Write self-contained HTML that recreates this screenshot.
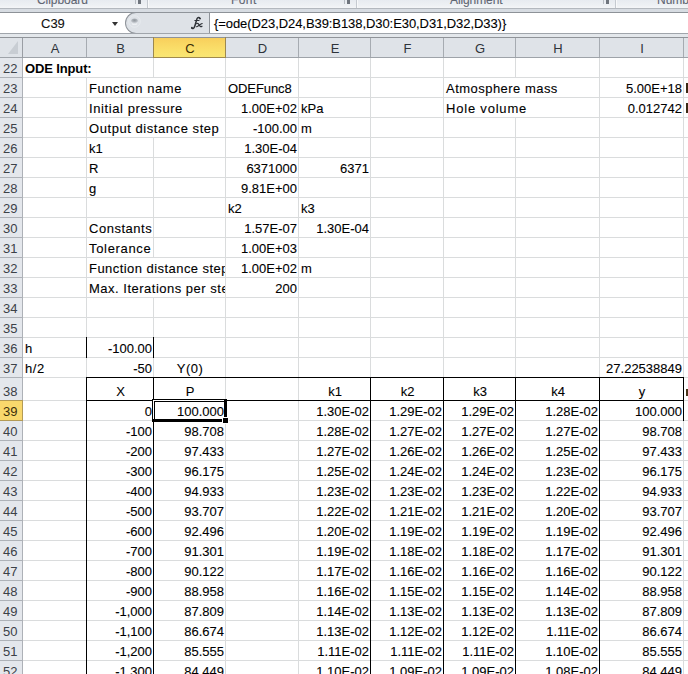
<!DOCTYPE html><html><head><meta charset="utf-8"><style>
*{margin:0;padding:0;box-sizing:border-box}
html,body{width:688px;height:674px;overflow:hidden;background:#fff}
body{position:relative;font-family:"Liberation Sans",sans-serif;font-size:13px;color:#000}
.a{position:absolute}
.t{position:absolute;white-space:pre;line-height:15px;font-size:13px;-webkit-text-stroke:0.1px currentColor}
.ns{-webkit-text-stroke:0}
.gh{position:absolute;height:1px;background:#dadcdd}
.gv{position:absolute;width:1px;background:#dadcdd}
.k{position:absolute;background:#000}
</style></head><body>

<div class="a" style="left:0;top:0;width:688px;height:8px;background:linear-gradient(#e7ebf0,#eef1f4 70%,#f4f6f8)"></div>
<div class="t" style="left:37px;top:-7px;color:#5f6672;font-size:12px;letter-spacing:-0.05px">Clipboard</div>
<div class="t" style="left:231px;top:-7px;color:#5f6672;font-size:12px;letter-spacing:0.4px">Font</div>
<div class="t" style="left:450px;top:-7px;color:#5f6672;font-size:12px;letter-spacing:-0.1px">Alignment</div>
<div class="t" style="left:657px;top:-7px;color:#5f6672;font-size:12px;letter-spacing:0px">Number</div>
<div class="a" style="left:147px;top:0;width:1px;height:8px;background:#c5cad0"></div>
<div class="a" style="left:148px;top:0;width:1px;height:8px;background:#f8f9fa"></div>
<div class="a" style="left:356px;top:0;width:1px;height:8px;background:#c5cad0"></div>
<div class="a" style="left:357px;top:0;width:1px;height:8px;background:#f8f9fa"></div>
<div class="a" style="left:615px;top:0;width:1px;height:8px;background:#c5cad0"></div>
<div class="a" style="left:616px;top:0;width:1px;height:8px;background:#f8f9fa"></div>
<div class="a" style="left:135px;top:0;width:1px;height:4px;background:#b9bec4"></div>
<div class="a" style="left:138px;top:0;width:3px;height:4px;background:#6f757d"></div>
<div class="a" style="left:344px;top:0;width:1px;height:4px;background:#b9bec4"></div>
<div class="a" style="left:347px;top:0;width:3px;height:4px;background:#6f757d"></div>
<div class="a" style="left:603px;top:0;width:1px;height:4px;background:#b9bec4"></div>
<div class="a" style="left:606px;top:0;width:3px;height:4px;background:#6f757d"></div>
<div class="a" style="left:0;top:8px;width:688px;height:1px;background:#b3b8be"></div>
<div class="a" style="left:0;top:9px;width:688px;height:3px;background:#d7dce2"></div>
<div class="a" style="left:0;top:12px;width:688px;height:1px;background:#8d9298"></div>
<div class="a" style="left:0;top:13px;width:688px;height:20px;background:#fff"></div>
<div class="a" style="left:125px;top:12px;width:85px;height:22px;background:#dee2e7;border:1px solid #8f949a;border-right:none;border-radius:11px 0 0 11px"></div>
<svg class="a" style="left:126px;top:13px" width="18" height="20"><defs><radialGradient id="cg" cx="50%" cy="35%" r="60%"><stop offset="0" stop-color="#8f959b"/><stop offset="0.6" stop-color="#b3b8be"/><stop offset="1" stop-color="#dfe3e8"/></radialGradient></defs><circle cx="8.5" cy="8.5" r="5.8" fill="none" stroke="#e9ecf0" stroke-width="0.8"/><ellipse cx="8.5" cy="8" rx="3.6" ry="2.6" fill="url(#cg)"/><path d="M6 10.8 C7.3 11.8 9.7 11.8 11 10.8" fill="none" stroke="#f4f6f8" stroke-width="1"/></svg>
<div class="a" style="left:209px;top:13px;width:1px;height:20px;background:#8d9298"></div>
<div class="t" style="left:41px;top:16px;font-size:13px;color:#111">C39</div>
<div class="a" style="left:112px;top:22px;width:0;height:0;border-left:3.5px solid transparent;border-right:3.5px solid transparent;border-top:4px solid #333"></div>
<svg class="a" style="left:188px;top:14px" width="20" height="18"><g fill="none" stroke="#2f3338" stroke-linecap="round"><path d="M11.9 4.3 C11.2 3.1 9.7 3.2 9.1 4.5 C8.3 6.2 7.4 11.2 6.4 13.1 C5.7 14.5 4.4 14.9 3.7 14.1" stroke-width="1.5"/><path d="M6.9 6.5 H11" stroke-width="1.2"/><path d="M8.7 9.6 C9.8 9.1 10.6 9.8 11.2 11.1 C11.8 12.4 12.7 12.9 13.9 12.3" stroke-width="1.3"/><path d="M14.2 9.6 C12.5 10.2 10.8 11.6 8.6 12.7" stroke-width="1.1"/></g><circle cx="12" cy="4.6" r="0.9" fill="#2f3338"/><circle cx="3.9" cy="13.6" r="0.9" fill="#2f3338"/></svg>
<div class="t" style="left:214px;top:16px;font-size:13px;color:#000;letter-spacing:-0.07px">{=ode(D23,D24,B39:B138,D30:E30,D31,D32,D33)}</div>
<div class="a" style="left:0;top:33px;width:688px;height:1px;background:#a0a5ab"></div>
<div class="a" style="left:0;top:34px;width:688px;height:3px;background:#e3e7eb"></div>
<div class="a" style="left:0;top:37px;width:688px;height:1px;background:#8f9398"></div>
<div class="a" style="left:0;top:38px;width:688px;height:19px;background:#dfe3e8"></div>
<div class="a" style="left:153px;top:38px;width:72px;height:19px;background:linear-gradient(#f8cf5c,#fadf6a 60%,#f9e673)"></div>
<div class="a" style="left:22px;top:38px;width:1px;height:19px;background:#a6abb1"></div>
<div class="a" style="left:86px;top:38px;width:1px;height:19px;background:#a6abb1"></div>
<div class="a" style="left:153px;top:38px;width:1px;height:19px;background:#a6abb1"></div>
<div class="a" style="left:225px;top:38px;width:1px;height:19px;background:#a6abb1"></div>
<div class="a" style="left:298px;top:38px;width:1px;height:19px;background:#a6abb1"></div>
<div class="a" style="left:370px;top:38px;width:1px;height:19px;background:#a6abb1"></div>
<div class="a" style="left:443px;top:38px;width:1px;height:19px;background:#a6abb1"></div>
<div class="a" style="left:515px;top:38px;width:1px;height:19px;background:#a6abb1"></div>
<div class="a" style="left:599px;top:38px;width:1px;height:19px;background:#a6abb1"></div>
<div class="a" style="left:683px;top:38px;width:1px;height:19px;background:#a6abb1"></div>
<div class="a" style="left:153px;top:37px;width:1px;height:21px;background:#9c8850"></div>
<div class="a" style="left:225px;top:37px;width:1px;height:21px;background:#9c8850"></div>
<div class="a" style="left:0;top:57px;width:688px;height:1px;background:#9ea3a9"></div>
<div class="a" style="left:153px;top:57px;width:73px;height:1px;background:#a08a4c"></div>
<div class="a" style="left:8px;top:41px;width:0;height:0;border-left:10px solid transparent;border-bottom:13px solid #c8cdd3"></div>
<div class="t ns" style="left:23px;width:64px;text-align:center;top:41px;color:#2e333a">A</div>
<div class="t ns" style="left:87px;width:67px;text-align:center;top:41px;color:#2e333a">B</div>
<div class="t ns" style="left:154px;width:72px;text-align:center;top:41px;color:#3a2c05">C</div>
<div class="t ns" style="left:226px;width:73px;text-align:center;top:41px;color:#2e333a">D</div>
<div class="t ns" style="left:299px;width:72px;text-align:center;top:41px;color:#2e333a">E</div>
<div class="t ns" style="left:371px;width:73px;text-align:center;top:41px;color:#2e333a">F</div>
<div class="t ns" style="left:444px;width:72px;text-align:center;top:41px;color:#2e333a">G</div>
<div class="t ns" style="left:516px;width:84px;text-align:center;top:41px;color:#2e333a">H</div>
<div class="t ns" style="left:600px;width:84px;text-align:center;top:41px;color:#2e333a">I</div>
<div class="a" style="left:0;top:58px;width:22px;height:616px;background:#e4e7ec"></div>
<div class="a" style="left:0;top:400px;width:22px;height:20px;background:#f9d86c"></div>
<div class="a" style="left:22px;top:38px;width:1px;height:20px;background:#9a9ea4"></div>
<div class="a" style="left:22px;top:58px;width:1px;height:616px;background:#adb1b7"></div>
<div class="a" style="left:22px;top:400px;width:1px;height:21px;background:#b39a55"></div>
<div class="a" style="left:0;top:77px;width:22px;height:1px;background:#aeb2b8"></div>
<div class="t ns" style="left:0;width:17.5px;text-align:right;top:61px;color:#3c4148">22</div>
<div class="a" style="left:0;top:97px;width:22px;height:1px;background:#aeb2b8"></div>
<div class="t ns" style="left:0;width:17.5px;text-align:right;top:81px;color:#3c4148">23</div>
<div class="a" style="left:0;top:117px;width:22px;height:1px;background:#aeb2b8"></div>
<div class="t ns" style="left:0;width:17.5px;text-align:right;top:101px;color:#3c4148">24</div>
<div class="a" style="left:0;top:137px;width:22px;height:1px;background:#aeb2b8"></div>
<div class="t ns" style="left:0;width:17.5px;text-align:right;top:121px;color:#3c4148">25</div>
<div class="a" style="left:0;top:157px;width:22px;height:1px;background:#aeb2b8"></div>
<div class="t ns" style="left:0;width:17.5px;text-align:right;top:141px;color:#3c4148">26</div>
<div class="a" style="left:0;top:177px;width:22px;height:1px;background:#aeb2b8"></div>
<div class="t ns" style="left:0;width:17.5px;text-align:right;top:161px;color:#3c4148">27</div>
<div class="a" style="left:0;top:197px;width:22px;height:1px;background:#aeb2b8"></div>
<div class="t ns" style="left:0;width:17.5px;text-align:right;top:181px;color:#3c4148">28</div>
<div class="a" style="left:0;top:217px;width:22px;height:1px;background:#aeb2b8"></div>
<div class="t ns" style="left:0;width:17.5px;text-align:right;top:201px;color:#3c4148">29</div>
<div class="a" style="left:0;top:237px;width:22px;height:1px;background:#aeb2b8"></div>
<div class="t ns" style="left:0;width:17.5px;text-align:right;top:221px;color:#3c4148">30</div>
<div class="a" style="left:0;top:257px;width:22px;height:1px;background:#aeb2b8"></div>
<div class="t ns" style="left:0;width:17.5px;text-align:right;top:241px;color:#3c4148">31</div>
<div class="a" style="left:0;top:277px;width:22px;height:1px;background:#aeb2b8"></div>
<div class="t ns" style="left:0;width:17.5px;text-align:right;top:261px;color:#3c4148">32</div>
<div class="a" style="left:0;top:297px;width:22px;height:1px;background:#aeb2b8"></div>
<div class="t ns" style="left:0;width:17.5px;text-align:right;top:281px;color:#3c4148">33</div>
<div class="a" style="left:0;top:317px;width:22px;height:1px;background:#aeb2b8"></div>
<div class="t ns" style="left:0;width:17.5px;text-align:right;top:301px;color:#3c4148">34</div>
<div class="a" style="left:0;top:337px;width:22px;height:1px;background:#aeb2b8"></div>
<div class="t ns" style="left:0;width:17.5px;text-align:right;top:321px;color:#3c4148">35</div>
<div class="a" style="left:0;top:357px;width:22px;height:1px;background:#aeb2b8"></div>
<div class="t ns" style="left:0;width:17.5px;text-align:right;top:341px;color:#3c4148">36</div>
<div class="a" style="left:0;top:377px;width:22px;height:1px;background:#aeb2b8"></div>
<div class="t ns" style="left:0;width:17.5px;text-align:right;top:361px;color:#3c4148">37</div>
<div class="a" style="left:0;top:400px;width:22px;height:1px;background:#b39a55"></div>
<div class="t ns" style="left:0;width:17.5px;text-align:right;top:384px;color:#3c4148">38</div>
<div class="a" style="left:0;top:420px;width:22px;height:1px;background:#b39a55"></div>
<div class="t ns" style="left:0;width:17.5px;text-align:right;top:404px;color:#3d2f0a">39</div>
<div class="a" style="left:0;top:440px;width:22px;height:1px;background:#aeb2b8"></div>
<div class="t ns" style="left:0;width:17.5px;text-align:right;top:424px;color:#3c4148">40</div>
<div class="a" style="left:0;top:460px;width:22px;height:1px;background:#aeb2b8"></div>
<div class="t ns" style="left:0;width:17.5px;text-align:right;top:444px;color:#3c4148">41</div>
<div class="a" style="left:0;top:480px;width:22px;height:1px;background:#aeb2b8"></div>
<div class="t ns" style="left:0;width:17.5px;text-align:right;top:464px;color:#3c4148">42</div>
<div class="a" style="left:0;top:500px;width:22px;height:1px;background:#aeb2b8"></div>
<div class="t ns" style="left:0;width:17.5px;text-align:right;top:484px;color:#3c4148">43</div>
<div class="a" style="left:0;top:520px;width:22px;height:1px;background:#aeb2b8"></div>
<div class="t ns" style="left:0;width:17.5px;text-align:right;top:504px;color:#3c4148">44</div>
<div class="a" style="left:0;top:540px;width:22px;height:1px;background:#aeb2b8"></div>
<div class="t ns" style="left:0;width:17.5px;text-align:right;top:524px;color:#3c4148">45</div>
<div class="a" style="left:0;top:560px;width:22px;height:1px;background:#aeb2b8"></div>
<div class="t ns" style="left:0;width:17.5px;text-align:right;top:544px;color:#3c4148">46</div>
<div class="a" style="left:0;top:580px;width:22px;height:1px;background:#aeb2b8"></div>
<div class="t ns" style="left:0;width:17.5px;text-align:right;top:564px;color:#3c4148">47</div>
<div class="a" style="left:0;top:600px;width:22px;height:1px;background:#aeb2b8"></div>
<div class="t ns" style="left:0;width:17.5px;text-align:right;top:584px;color:#3c4148">48</div>
<div class="a" style="left:0;top:620px;width:22px;height:1px;background:#aeb2b8"></div>
<div class="t ns" style="left:0;width:17.5px;text-align:right;top:604px;color:#3c4148">49</div>
<div class="a" style="left:0;top:640px;width:22px;height:1px;background:#aeb2b8"></div>
<div class="t ns" style="left:0;width:17.5px;text-align:right;top:624px;color:#3c4148">50</div>
<div class="a" style="left:0;top:660px;width:22px;height:1px;background:#aeb2b8"></div>
<div class="t ns" style="left:0;width:17.5px;text-align:right;top:644px;color:#3c4148">51</div>
<div class="a" style="left:0;top:680px;width:22px;height:1px;background:#aeb2b8"></div>
<div class="t ns" style="left:0;width:17.5px;text-align:right;top:664px;color:#3c4148">52</div>
<div class="gh" style="left:23px;top:77px;width:665px"></div>
<div class="gh" style="left:23px;top:97px;width:665px"></div>
<div class="gh" style="left:23px;top:117px;width:665px"></div>
<div class="gh" style="left:23px;top:137px;width:665px"></div>
<div class="gh" style="left:23px;top:157px;width:665px"></div>
<div class="gh" style="left:23px;top:177px;width:665px"></div>
<div class="gh" style="left:23px;top:197px;width:665px"></div>
<div class="gh" style="left:23px;top:217px;width:665px"></div>
<div class="gh" style="left:23px;top:237px;width:665px"></div>
<div class="gh" style="left:23px;top:257px;width:665px"></div>
<div class="gh" style="left:23px;top:277px;width:665px"></div>
<div class="gh" style="left:23px;top:297px;width:665px"></div>
<div class="gh" style="left:23px;top:317px;width:665px"></div>
<div class="gh" style="left:23px;top:337px;width:665px"></div>
<div class="gh" style="left:23px;top:357px;width:665px"></div>
<div class="gh" style="left:23px;top:377px;width:665px"></div>
<div class="gh" style="left:23px;top:400px;width:665px"></div>
<div class="gh" style="left:23px;top:420px;width:665px"></div>
<div class="gh" style="left:23px;top:440px;width:665px"></div>
<div class="gh" style="left:23px;top:460px;width:665px"></div>
<div class="gh" style="left:23px;top:480px;width:665px"></div>
<div class="gh" style="left:23px;top:500px;width:665px"></div>
<div class="gh" style="left:23px;top:520px;width:665px"></div>
<div class="gh" style="left:23px;top:540px;width:665px"></div>
<div class="gh" style="left:23px;top:560px;width:665px"></div>
<div class="gh" style="left:23px;top:580px;width:665px"></div>
<div class="gh" style="left:23px;top:600px;width:665px"></div>
<div class="gh" style="left:23px;top:620px;width:665px"></div>
<div class="gh" style="left:23px;top:640px;width:665px"></div>
<div class="gh" style="left:23px;top:660px;width:665px"></div>
<div class="gh" style="left:23px;top:680px;width:665px"></div>
<div class="gv" style="left:86px;top:77px;height:604px"></div>
<div class="gv" style="left:153px;top:58px;height:20px"></div>
<div class="gv" style="left:153px;top:137px;height:121px"></div>
<div class="gv" style="left:153px;top:297px;height:384px"></div>
<div class="gv" style="left:225px;top:58px;height:623px"></div>
<div class="gv" style="left:298px;top:58px;height:623px"></div>
<div class="gv" style="left:370px;top:58px;height:623px"></div>
<div class="gv" style="left:443px;top:58px;height:623px"></div>
<div class="gv" style="left:515px;top:58px;height:20px"></div>
<div class="gv" style="left:515px;top:117px;height:564px"></div>
<div class="gv" style="left:599px;top:58px;height:623px"></div>
<div class="gv" style="left:683px;top:58px;height:623px"></div>
<div class="k" style="left:86px;top:337px;width:1px;height:21px"></div>
<div class="k" style="left:153px;top:337px;width:1px;height:21px"></div>
<div class="k" style="left:86px;top:377px;width:598px;height:1px"></div>
<div class="k" style="left:86px;top:400px;width:598px;height:1px"></div>
<div class="k" style="left:86px;top:377px;width:1px;height:298px"></div>
<div class="k" style="left:153px;top:377px;width:1px;height:298px"></div>
<div class="k" style="left:370px;top:377px;width:1px;height:298px"></div>
<div class="k" style="left:443px;top:377px;width:1px;height:298px"></div>
<div class="k" style="left:515px;top:377px;width:1px;height:298px"></div>
<div class="k" style="left:599px;top:377px;width:1px;height:298px"></div>
<div class="k" style="left:683px;top:377px;width:1px;height:44px"></div>
<div class="t" style="left:25px;top:61px;font-weight:bold;-webkit-text-stroke:0;letter-spacing:-0.133px;">ODE Input:</div>
<div class="t" style="left:89px;top:81px;letter-spacing:0.533px;">Function name</div>
<div class="t" style="left:89px;top:101px;letter-spacing:0.587px;">Initial pressure</div>
<div class="t" style="left:89px;top:121px;letter-spacing:0.558px;">Output distance step</div>
<div class="t" style="left:89px;top:141px;">k1</div>
<div class="t" style="left:89px;top:161px;">R</div>
<div class="t" style="left:89px;top:181px;">g</div>
<div class="t" style="left:89px;top:221px;letter-spacing:0.525px;">Constants</div>
<div class="t" style="left:89px;top:241px;letter-spacing:0.675px;">Tolerance</div>
<div class="a" style="left:86px;top:257px;width:139px;height:20px;overflow:hidden"><div class="t" style="left:3px;top:4px;letter-spacing:0.450px;">Function distance step</div></div>
<div class="a" style="left:86px;top:277px;width:139px;height:20px;overflow:hidden"><div class="t" style="left:3px;top:4px;letter-spacing:0.500px;">Max. Iterations per ste</div></div>
<div class="t" style="left:228px;top:81px;letter-spacing:-0.086px;">ODEFunc8</div>
<div class="t" style="right:391px;top:101px;">1.00E+02</div>
<div class="t" style="right:391px;top:121px;">-100.00</div>
<div class="t" style="right:391px;top:141px;">1.30E-04</div>
<div class="t" style="right:391px;top:161px;">6371000</div>
<div class="t" style="right:391px;top:181px;">9.81E+00</div>
<div class="t" style="left:228px;top:201px;">k2</div>
<div class="t" style="left:301px;top:201px;">k3</div>
<div class="t" style="right:391px;top:221px;">1.57E-07</div>
<div class="t" style="right:319px;top:221px;">1.30E-04</div>
<div class="t" style="right:391px;top:241px;">1.00E+03</div>
<div class="t" style="right:391px;top:261px;">1.00E+02</div>
<div class="t" style="left:301px;top:261px;">m</div>
<div class="t" style="right:391px;top:281px;">200</div>
<div class="t" style="left:301px;top:101px;">kPa</div>
<div class="t" style="left:301px;top:121px;">m</div>
<div class="t" style="right:319px;top:161px;">6371</div>
<div class="t" style="left:446px;top:81px;letter-spacing:0.471px;">Atmosphere mass</div>
<div class="t" style="left:446px;top:101px;letter-spacing:0.800px;">Hole volume</div>
<div class="t" style="right:6px;top:81px;">5.00E+18</div>
<div class="t" style="right:6px;top:101px;">0.012742</div>
<div class="t" style="left:25px;top:341px;">h</div>
<div class="t" style="right:536px;top:341px;">-100.00</div>
<div class="t" style="left:25px;top:361px;letter-spacing:0.600px;">h/2</div>
<div class="t" style="right:536px;top:361px;">-50</div>
<div class="t" style="left:154px;width:72px;text-align:center;top:361px;letter-spacing:0.500px;">Y(0)</div>
<div class="t" style="right:6px;top:361px;">27.22538849</div>
<div class="t" style="left:87px;width:67px;text-align:center;top:384px;">X</div>
<div class="t" style="left:154px;width:72px;text-align:center;top:384px;">P</div>
<div class="t" style="left:299px;width:72px;text-align:center;top:384px;">k1</div>
<div class="t" style="left:371px;width:73px;text-align:center;top:384px;">k2</div>
<div class="t" style="left:444px;width:72px;text-align:center;top:384px;">k3</div>
<div class="t" style="left:516px;width:84px;text-align:center;top:384px;">k4</div>
<div class="t" style="left:600px;width:84px;text-align:center;top:384px;">y</div>
<div class="t" style="right:536px;top:404px;">0</div>
<div class="t" style="right:464px;top:404px;">100.000</div>
<div class="t" style="right:319px;top:404px;">1.30E-02</div>
<div class="t" style="right:246px;top:404px;">1.29E-02</div>
<div class="t" style="right:174px;top:404px;">1.29E-02</div>
<div class="t" style="right:90px;top:404px;">1.28E-02</div>
<div class="t" style="right:6px;top:404px;">100.000</div>
<div class="t" style="right:536px;top:424px;">-100</div>
<div class="t" style="right:464px;top:424px;">98.708</div>
<div class="t" style="right:319px;top:424px;">1.28E-02</div>
<div class="t" style="right:246px;top:424px;">1.27E-02</div>
<div class="t" style="right:174px;top:424px;">1.27E-02</div>
<div class="t" style="right:90px;top:424px;">1.27E-02</div>
<div class="t" style="right:6px;top:424px;">98.708</div>
<div class="t" style="right:536px;top:444px;">-200</div>
<div class="t" style="right:464px;top:444px;">97.433</div>
<div class="t" style="right:319px;top:444px;">1.27E-02</div>
<div class="t" style="right:246px;top:444px;">1.26E-02</div>
<div class="t" style="right:174px;top:444px;">1.26E-02</div>
<div class="t" style="right:90px;top:444px;">1.25E-02</div>
<div class="t" style="right:6px;top:444px;">97.433</div>
<div class="t" style="right:536px;top:464px;">-300</div>
<div class="t" style="right:464px;top:464px;">96.175</div>
<div class="t" style="right:319px;top:464px;">1.25E-02</div>
<div class="t" style="right:246px;top:464px;">1.24E-02</div>
<div class="t" style="right:174px;top:464px;">1.24E-02</div>
<div class="t" style="right:90px;top:464px;">1.23E-02</div>
<div class="t" style="right:6px;top:464px;">96.175</div>
<div class="t" style="right:536px;top:484px;">-400</div>
<div class="t" style="right:464px;top:484px;">94.933</div>
<div class="t" style="right:319px;top:484px;">1.23E-02</div>
<div class="t" style="right:246px;top:484px;">1.23E-02</div>
<div class="t" style="right:174px;top:484px;">1.23E-02</div>
<div class="t" style="right:90px;top:484px;">1.22E-02</div>
<div class="t" style="right:6px;top:484px;">94.933</div>
<div class="t" style="right:536px;top:504px;">-500</div>
<div class="t" style="right:464px;top:504px;">93.707</div>
<div class="t" style="right:319px;top:504px;">1.22E-02</div>
<div class="t" style="right:246px;top:504px;">1.21E-02</div>
<div class="t" style="right:174px;top:504px;">1.21E-02</div>
<div class="t" style="right:90px;top:504px;">1.20E-02</div>
<div class="t" style="right:6px;top:504px;">93.707</div>
<div class="t" style="right:536px;top:524px;">-600</div>
<div class="t" style="right:464px;top:524px;">92.496</div>
<div class="t" style="right:319px;top:524px;">1.20E-02</div>
<div class="t" style="right:246px;top:524px;">1.19E-02</div>
<div class="t" style="right:174px;top:524px;">1.19E-02</div>
<div class="t" style="right:90px;top:524px;">1.19E-02</div>
<div class="t" style="right:6px;top:524px;">92.496</div>
<div class="t" style="right:536px;top:544px;">-700</div>
<div class="t" style="right:464px;top:544px;">91.301</div>
<div class="t" style="right:319px;top:544px;">1.19E-02</div>
<div class="t" style="right:246px;top:544px;">1.18E-02</div>
<div class="t" style="right:174px;top:544px;">1.18E-02</div>
<div class="t" style="right:90px;top:544px;">1.17E-02</div>
<div class="t" style="right:6px;top:544px;">91.301</div>
<div class="t" style="right:536px;top:564px;">-800</div>
<div class="t" style="right:464px;top:564px;">90.122</div>
<div class="t" style="right:319px;top:564px;">1.17E-02</div>
<div class="t" style="right:246px;top:564px;">1.16E-02</div>
<div class="t" style="right:174px;top:564px;">1.16E-02</div>
<div class="t" style="right:90px;top:564px;">1.16E-02</div>
<div class="t" style="right:6px;top:564px;">90.122</div>
<div class="t" style="right:536px;top:584px;">-900</div>
<div class="t" style="right:464px;top:584px;">88.958</div>
<div class="t" style="right:319px;top:584px;">1.16E-02</div>
<div class="t" style="right:246px;top:584px;">1.15E-02</div>
<div class="t" style="right:174px;top:584px;">1.15E-02</div>
<div class="t" style="right:90px;top:584px;">1.14E-02</div>
<div class="t" style="right:6px;top:584px;">88.958</div>
<div class="t" style="right:536px;top:604px;">-1,000</div>
<div class="t" style="right:464px;top:604px;">87.809</div>
<div class="t" style="right:319px;top:604px;">1.14E-02</div>
<div class="t" style="right:246px;top:604px;">1.13E-02</div>
<div class="t" style="right:174px;top:604px;">1.13E-02</div>
<div class="t" style="right:90px;top:604px;">1.13E-02</div>
<div class="t" style="right:6px;top:604px;">87.809</div>
<div class="t" style="right:536px;top:624px;">-1,100</div>
<div class="t" style="right:464px;top:624px;">86.674</div>
<div class="t" style="right:319px;top:624px;">1.13E-02</div>
<div class="t" style="right:246px;top:624px;">1.12E-02</div>
<div class="t" style="right:174px;top:624px;">1.12E-02</div>
<div class="t" style="right:90px;top:624px;">1.11E-02</div>
<div class="t" style="right:6px;top:624px;">86.674</div>
<div class="t" style="right:536px;top:644px;">-1,200</div>
<div class="t" style="right:464px;top:644px;">85.555</div>
<div class="t" style="right:319px;top:644px;">1.11E-02</div>
<div class="t" style="right:246px;top:644px;">1.11E-02</div>
<div class="t" style="right:174px;top:644px;">1.11E-02</div>
<div class="t" style="right:90px;top:644px;">1.10E-02</div>
<div class="t" style="right:6px;top:644px;">85.555</div>
<div class="t" style="right:536px;top:664px;">-1,300</div>
<div class="t" style="right:464px;top:664px;">84.449</div>
<div class="t" style="right:319px;top:664px;">1.10E-02</div>
<div class="t" style="right:246px;top:664px;">1.09E-02</div>
<div class="t" style="right:174px;top:664px;">1.09E-02</div>
<div class="t" style="right:90px;top:664px;">1.08E-02</div>
<div class="t" style="right:6px;top:664px;">84.449</div>
<div class="a" style="left:152px;top:399px;width:75px;height:1px;background:#000"></div>
<div class="a" style="left:152px;top:400px;width:72px;height:1px;background:#fff"></div>
<div class="a" style="left:154px;top:401px;width:70px;height:1px;background:#000"></div>
<div class="a" style="left:152px;top:399px;width:1px;height:23px;background:#000"></div>
<div class="a" style="left:153px;top:400px;width:1px;height:19px;background:#fff"></div>
<div class="a" style="left:154px;top:401px;width:1px;height:18px;background:#000"></div>
<div class="a" style="left:224px;top:399px;width:3px;height:18px;background:#000"></div>
<div class="a" style="left:152px;top:419px;width:70px;height:3px;background:#000"></div>
<div class="a" style="left:222px;top:417px;width:7px;height:7px;background:#fff"></div>
<div class="a" style="left:223px;top:418px;width:5px;height:5px;background:#000"></div>
<div class="a" style="left:686px;top:83px;width:2px;height:10px;background:#3b2a14"></div>
<div class="a" style="left:686px;top:103px;width:2px;height:10px;background:#3b2a14"></div>
<div class="a" style="left:686px;top:389px;width:2px;height:7px;background:#4a3418"></div>
</body></html>
